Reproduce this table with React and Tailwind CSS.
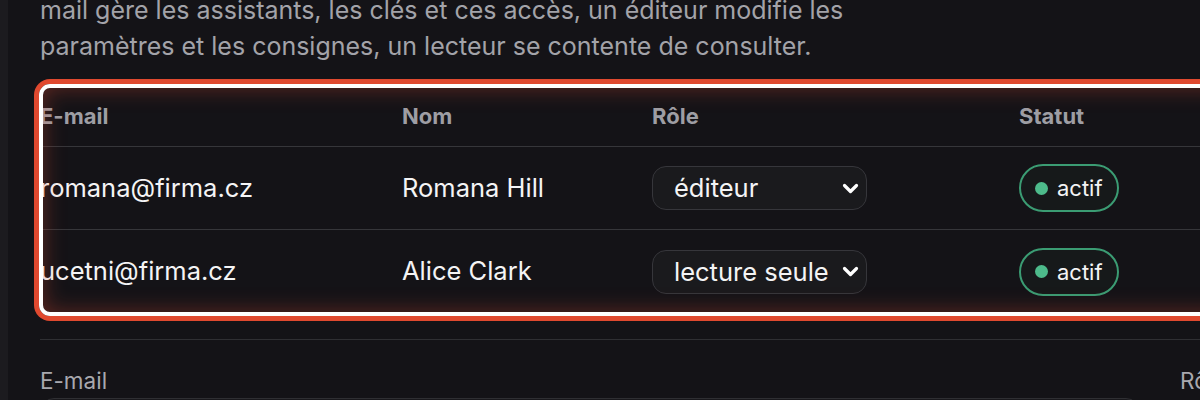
import React from 'react';

const members = [
    { email: 'romana@firma.cz', name: 'Romana Hill', role: 'éditeur', status: 'actif' },
    { email: 'ucetni@firma.cz', name: 'Alice Clark', role: 'lecture seule', status: 'actif' },
];

function RoleSelect({ value }) {
    return (
        <div className="flex h-[44px] w-[215px] items-center justify-between rounded-[14px] border-[1.5px] border-[#36363b] bg-[#1a1a1d] pl-[21px] pr-[7px]">
            <span className="text-[25.5px] leading-none text-[#f4f4f5]">{value}</span>
            <svg width="17" height="11" viewBox="0 0 17 11" fill="none" stroke="#ffffff" strokeWidth="3.2" strokeLinecap="round" strokeLinejoin="round">
                <path d="M2.5 2.5l6 6 6-6" />
            </svg>
        </div>
    );
}

function StatusBadge({ label }) {
    return (
        <div className="inline-flex h-[48px] items-center gap-[9px] rounded-full border-2 border-[#3b9c73] bg-[#16191a] pl-[14px] pr-[14px]">
            <span className="h-[13px] w-[13px] rounded-full bg-[#4dbb8b]" />
            <span className="text-[22px] leading-none text-[#f4f4f5]">{label}</span>
        </div>
    );
}

export default function App() {
    return (
        <div className="flex h-[400px] overflow-hidden bg-[#141317] font-['Inter',sans-serif]">
            {/* sidebar edge */}
            <div className="w-[8px] shrink-0 bg-[#1c1b1f]" />

            <div className="min-w-0 flex-1 pl-[32px]">
                <p className="-mt-[8px] max-w-[860px] text-[25px] leading-[36px] text-[#a3a3a9]">
                    mail gère les assistants, les clés et ces accès, un éditeur modifie les
                    paramètres et les consignes, un lecteur se contente de consulter.
                </p>

                {/* Members table */}
                <div className="relative mt-[23px] w-[1200px]">
                    <div className="grid h-[60px] grid-cols-[362px_250px_367px_1fr] items-center border-b border-[#36363a] text-[22px] font-bold text-[#9e9ea4]">
                        <div>E-mail</div>
                        <div>Nom</div>
                        <div>Rôle</div>
                        <div>Statut</div>
                    </div>
                    {members.map((m, i) => (
                        <div
                            key={m.email}
                            className={`grid h-[83px] grid-cols-[362px_250px_367px_1fr] items-center text-[25.5px] text-[#f4f4f5] ${i < members.length - 1 ? 'border-b border-[#36363a]' : ''}`}
                        >
                            <div>{m.email}</div>
                            <div>{m.name}</div>
                            <div><RoleSelect value={m.role} /></div>
                            <div><StatusBadge label={m.status} /></div>
                        </div>
                    ))}

                    {/* highlight ring */}
                    <div className="pointer-events-none absolute -top-[3px] -bottom-[3px] -left-px -right-[60px] rounded-[11px] border-4 border-white shadow-[0_0_0_5px_#e0492f,inset_0_0_22px_rgba(226,74,51,0.38)]" />
                </div>

                {/* Invite form */}
                <div className="mt-[26px] w-[1400px] border-t border-[#2f2f33]">
                    <div className="grid grid-cols-[1140px_1fr] pt-[24px] text-[22.5px] leading-[34px] text-[#a8a8ae]">
                        <div>E-mail</div>
                        <div>Rôle</div>
                    </div>
                    <div className="h-[48px] w-[1100px] rounded-[14px] border-[1.5px] border-[#2f2f33] bg-[#19181c]" />
                </div>
            </div>
        </div>
    );
}
